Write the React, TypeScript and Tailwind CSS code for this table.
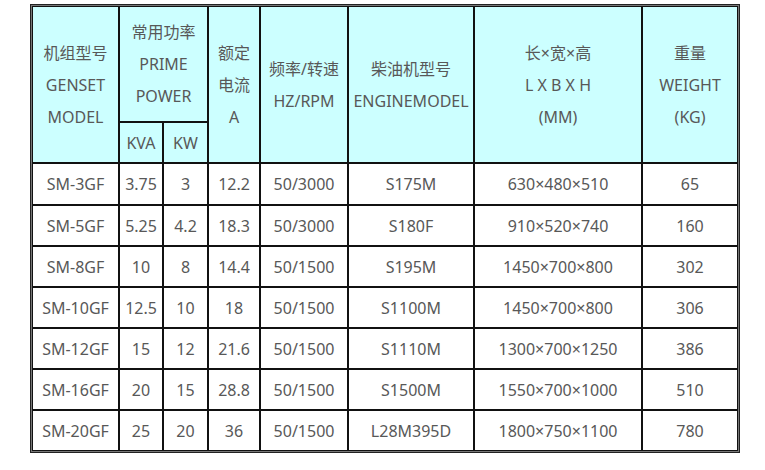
import React from 'react';

const rows = [
  ['SM-3GF', '3.75', '3', '12.2', '50/3000', 'S175M', '630×480×510', '65'],
  ['SM-5GF', '5.25', '4.2', '18.3', '50/3000', 'S180F', '910×520×740', '160'],
  ['SM-8GF', '10', '8', '14.4', '50/1500', 'S195M', '1450×700×800', '302'],
  ['SM-10GF', '12.5', '10', '18', '50/1500', 'S1100M', '1450×700×800', '306'],
  ['SM-12GF', '15', '12', '21.6', '50/1500', 'S1110M', '1300×700×1250', '386'],
  ['SM-16GF', '20', '15', '28.8', '50/1500', 'S1500M', '1550×700×1000', '510'],
  ['SM-20GF', '25', '20', '36', '50/1500', 'L28M395D', '1800×750×1100', '780'],
];

const cell = 'border border-[#111] p-0 text-center align-middle';
const head = `${cell} bg-[#ccffff] leading-[32px]`;

export default function App() {
  return (
    <div className="w-[765px] h-[470px] bg-white pl-[30px] pt-[4px] text-[16px] text-[#585858] font-['Noto_Sans','Noto_Sans_CJK_SC',sans-serif]">
      <div className="w-[710px] border border-[#222]">
        <table className="w-[708px] table-fixed border-separate border-spacing-0 border border-[#777]">
          <colgroup>
            <col className="w-[87px]" />
            <col className="w-[44px]" />
            <col className="w-[45px]" />
            <col className="w-[52px]" />
            <col className="w-[88px]" />
            <col className="w-[126px]" />
            <col className="w-[168px]" />
            <col className="w-[96px]" />
          </colgroup>
          <thead>
            <tr className="h-[116px]">
              <td rowSpan={2} className={head}>
                <div>机组型号</div>
                <div>GENSET</div>
                <div>MODEL</div>
              </td>
              <td colSpan={2} className={head}>
                <div>常用功率</div>
                <div>PRIME</div>
                <div>POWER</div>
              </td>
              <td rowSpan={2} className={head}>
                <div>额定</div>
                <div>电流</div>
                <div>A</div>
              </td>
              <td rowSpan={2} className={head}>
                <div>频率/转速</div>
                <div>HZ/RPM</div>
              </td>
              <td rowSpan={2} className={head}>
                <div>柴油机型号</div>
                <div>ENGINEMODEL</div>
              </td>
              <td rowSpan={2} className={head}>
                <div>长×宽×高</div>
                <div>L X B X H</div>
                <div>(MM)</div>
              </td>
              <td rowSpan={2} className={head}>
                <div>重量</div>
                <div>WEIGHT</div>
                <div>(KG)</div>
              </td>
            </tr>
            <tr className="h-[41px]">
              <td className={head}>KVA</td>
              <td className={head}>KW</td>
            </tr>
          </thead>
          <tbody>
            {rows.map((r, i) => (
              <tr key={r[0]} className={i === 0 ? 'h-[42px]' : 'h-[41px]'}>
                {r.map((v, j) => (
                  <td key={j} className={cell}>
                    {v}
                  </td>
                ))}
              </tr>
            ))}
          </tbody>
        </table>
      </div>
    </div>
  );
}
